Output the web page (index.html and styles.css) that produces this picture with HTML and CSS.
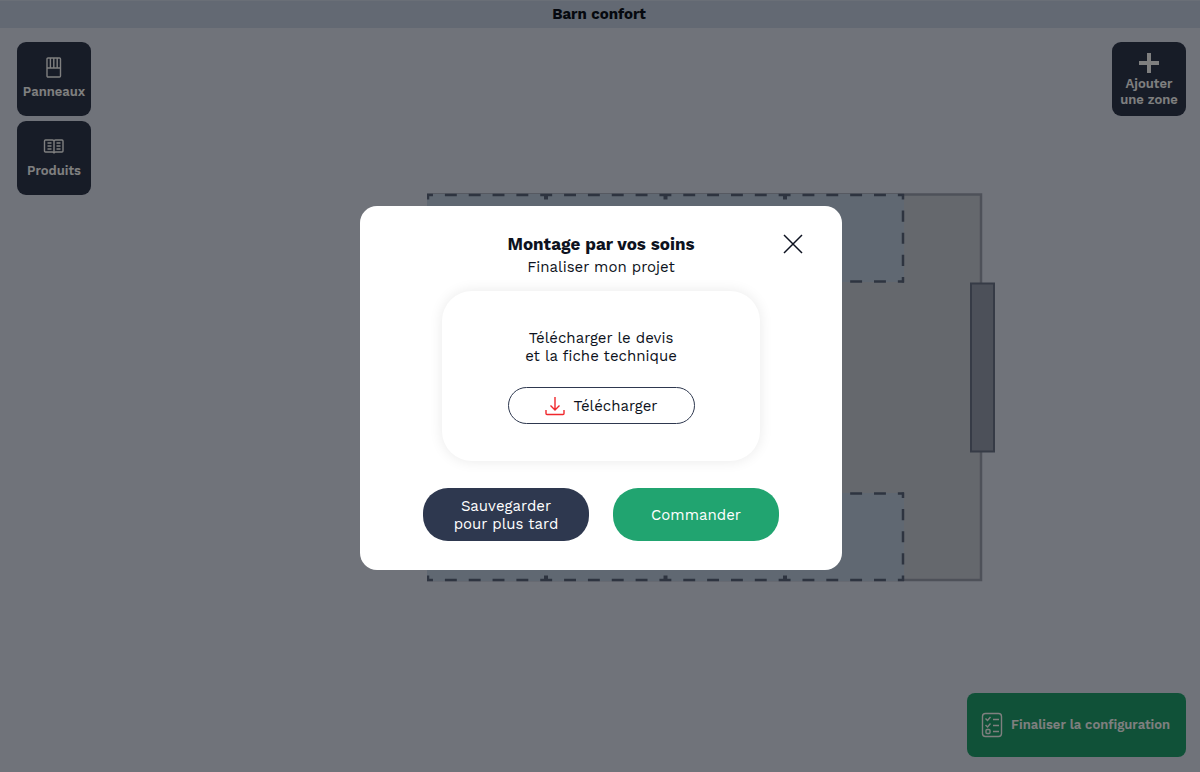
FILE: index.html
```html
<!DOCTYPE html>
<html lang="fr">
<head>
<meta charset="utf-8">
<meta name="viewport" content="width=device-width, initial-scale=1">
<title>Barn confort</title>
<link rel="stylesheet" href="styles.css">
</head>
<body>
<div class="app">
  <header class="topbar"><h1 class="topbar-title">Barn confort</h1></header>
  <main class="workspace">
    <svg class="plan" width="568" height="389" viewBox="427 193 568 389" aria-hidden="true">
      <rect class="room" x="428" y="194.500" width="553" height="385.500"/>
      <rect class="zone" x="427" y="194" width="477" height="88"/>
      <rect class="zone" x="427" y="493" width="477" height="88"/>
      <g class="dash-h">
        <path d="M427 195H904"/><path d="M427 281.500H904"/>
        <path d="M427 493.500H904"/><path d="M427 580H904"/>
      </g>
      <g class="dash-v">
        <path d="M428 194V282.500"/><path d="M903 194V282.500"/>
        <path d="M428 492.500V581"/><path d="M903 492.500V581"/>
      </g>
      <g class="dash-v dash-shared">
        <path d="M546 194V282.500"/><path d="M665.500 194V282.500"/><path d="M785 194V282.500"/>
        <path d="M546 492.500V581"/><path d="M665.500 492.500V581"/><path d="M785 492.500V581"/>
      </g>
      <rect class="door" x="971" y="283.500" width="23" height="168"/>
    </svg>

    <nav class="tools" aria-label="Outils">
      <button class="tile" type="button">
        <svg class="tile-icon" width="22" height="26" viewBox="0 0 22 26" aria-hidden="true">
          <rect x="4" y="3" width="13.500" height="19" rx="1"/>
          <path d="M4 13H17.500M7.400 3V13M10.800 3V13M14.200 3V13"/>
        </svg>
        <span>Panneaux</span>
      </button>
      <button class="tile" type="button">
        <svg class="tile-icon" width="22" height="26" viewBox="0 0 22 26" aria-hidden="true">
          <path d="M2.500 6H9.500Q11 6 11 7.200Q11 6 12.500 6H19Q20 6 20 7V17Q20 18 19 18H12.500Q11 18 11 19.500Q11 18 9.500 18H2.500Q1.500 18 1.500 17V7Q1.500 6 2.500 6ZM11 7V19"/>
          <path d="M4.500 9H8.500M4.500 12H8.500M4.500 15H8.500M13.500 9H17.500M13.500 12H17.500M13.500 15H17.500"/>
        </svg>
        <span>Produits</span>
      </button>
    </nav>

    <div class="actions">
      <button class="tile tile-add" type="button">
        <svg class="tile-plus" width="20" height="20" viewBox="0 0 20 20" aria-hidden="true"><path d="M10 0V20M0 10H20"/></svg>
        <span>Ajouter<br>une zone</span>
      </button>
      <button class="finalize" type="button">
        <svg class="list-icon" width="22" height="26" viewBox="0 0 22 26" aria-hidden="true">
          <rect x="1.500" y="1.500" width="19" height="23" rx="3"/>
          <path d="M4.500 6.500L6.500 8.500L9.500 5M4.500 13L6.500 15L9.500 11.500M12 7.500H18M12 13.500H18M12 19.500H18"/>
          <rect x="5" y="17.500" width="4" height="4" rx="1"/>
        </svg>
        <span>Finaliser la configuration</span>
      </button>
    </div>
  </main>
</div>

<div class="overlay">
  <section class="modal" role="dialog" aria-modal="true" aria-labelledby="modal-title">
    <button class="close" type="button" aria-label="Fermer">
      <svg width="20" height="20" viewBox="0 0 20 20" aria-hidden="true"><path d="M1 1L19 19M19 1L1 19"/></svg>
    </button>
    <h2 class="modal-title" id="modal-title">Montage par vos soins</h2>
    <p class="modal-subtitle">Finaliser mon projet</p>
    <div class="card">
      <p class="card-text">Télécharger le devis<br>et la fiche technique</p>
      <button class="download" type="button">
        <svg width="20" height="20" viewBox="0 0 20 20" aria-hidden="true"><path d="M10 1V13.500M5.500 9.500L10 14L14.500 9.500M1 14V17.500Q1 18.500 2 18.500H18Q19 18.500 19 17.500V14"/></svg>
        <span>Télécharger</span>
      </button>
    </div>
    <div class="modal-actions">
      <button class="pill pill-dark" type="button">Sauvegarder<br>pour plus tard</button>
      <button class="pill pill-green" type="button">Commander</button>
    </div>
  </section>
</div>
</body>
</html>
```
FILE: styles.css
```css
* { box-sizing: border-box; }
body {
  margin: 0;
  font-family: "Work Sans", Inter, sans-serif;
  color: #0d1220;
  background: #e0e6f4;
}
h1, h2, p { margin: 0; }
button { font: inherit; border: 0; padding: 0; cursor: pointer; }
svg { fill: none; flex: none; }

.app { min-height: 100vh; display: flex; flex-direction: column; }
.topbar {
  height: 28px;
  display: flex;
  align-items: flex-start;
  justify-content: center;
  padding: 3px 2px 0 0;
  background: #c6d3e6;
  border-top: 1px solid #d4dfee;
}
.topbar-title { font-size: 15px; line-height: 20px; font-weight: 700; }

.workspace {
  position: relative;
  flex: 1;
  display: flex;
  justify-content: space-between;
  padding: 14px 14px 15px 17px;
}
.tools { position: relative; display: flex; flex-direction: column; gap: 5px; }
.actions {
  position: relative;
  display: flex;
  flex-direction: column;
  align-items: flex-end;
  justify-content: space-between;
}
.tile {
  width: 74px;
  height: 74px;
  padding: 0 0 3px;
  border-radius: 9px;
  background: #2e384f;
  color: #fff;
  display: flex;
  flex-direction: column;
  align-items: center;
  justify-content: center;
  gap: 3px;
  font-size: 13px;
  line-height: 16px;
  font-weight: 600;
}
.tile-add { padding: 3px 0 0; }
.tile-icon { stroke: #fff; stroke-width: 1.4; }
.tile-plus { stroke: #fff; stroke-width: 4; }
.finalize {
  height: 64px;
  padding: 0 16px 0 14px;
  border-radius: 8px;
  background: #20a370;
  color: #fff;
  display: flex;
  align-items: center;
  gap: 8px;
  font-size: 13px;
  line-height: 20px;
  font-weight: 600;
}
.list-icon { stroke: #fff; stroke-width: 1.4; }

.plan { position: absolute; left: 427px; top: 165px; }
.room { fill: #cbd0db; stroke: #9ca2b2; stroke-width: 2.500; }
.zone { fill: #c0d1e4; }
.dash-h { stroke: #5c6880; stroke-width: 2.500; stroke-dasharray: 11.920 11.920; stroke-dashoffset: 5.960; }
.dash-v { stroke: #5c6880; stroke-width: 2.500; stroke-dasharray: 11.060 11.060; stroke-dashoffset: 5.530; }
.dash-shared { stroke-width: 4; }
.door { fill: #98a0b2; stroke: #6c778c; stroke-width: 2; }

.overlay {
  position: fixed;
  inset: 0;
  display: grid;
  place-items: center;
  padding: 4px 0 0 2px;
  background: rgba(0, 0, 0, 0.5);
}
.modal {
  position: relative;
  width: 482px;
  max-width: 100%;
  padding: 26px 24px 29px;
  border-radius: 17px;
  background: #fff;
  display: flex;
  flex-direction: column;
  align-items: center;
  text-align: center;
}
.close {
  position: absolute;
  top: 28px;
  right: 39px;
  width: 20px;
  height: 20px;
  background: none;
}
.close svg { display: block; stroke: #0d1220; stroke-width: 1.5; }
.modal-title { font-size: 17px; line-height: 24px; font-weight: 700; }
.modal-subtitle { font-size: 15px; line-height: 22px; }
.card {
  width: 318px;
  max-width: 100%;
  margin-top: 13px;
  padding: 38px 24px 37px;
  border-radius: 30px;
  box-shadow: 0 0 14px rgba(0, 0, 0, 0.09);
  display: flex;
  flex-direction: column;
  align-items: center;
  gap: 22px;
}
.card-text { font-size: 15px; line-height: 18px; }
.download {
  width: 187px;
  height: 37px;
  border: 1px solid #2e384f;
  border-radius: 19px;
  background: #fff;
  color: #0d1220;
  display: flex;
  align-items: center;
  justify-content: center;
  gap: 9px;
  font-size: 15px;
}
.download svg { stroke: #f0282d; stroke-width: 1.4; }
.modal-actions { display: flex; gap: 24px; margin-top: 27px; }
.pill {
  width: 166px;
  height: 53px;
  border-radius: 25px;
  color: #fff;
  font-size: 15px;
  line-height: 18px;
}
.pill-dark { background: #2e384f; }
.pill-green { background: #21a470; }
```
